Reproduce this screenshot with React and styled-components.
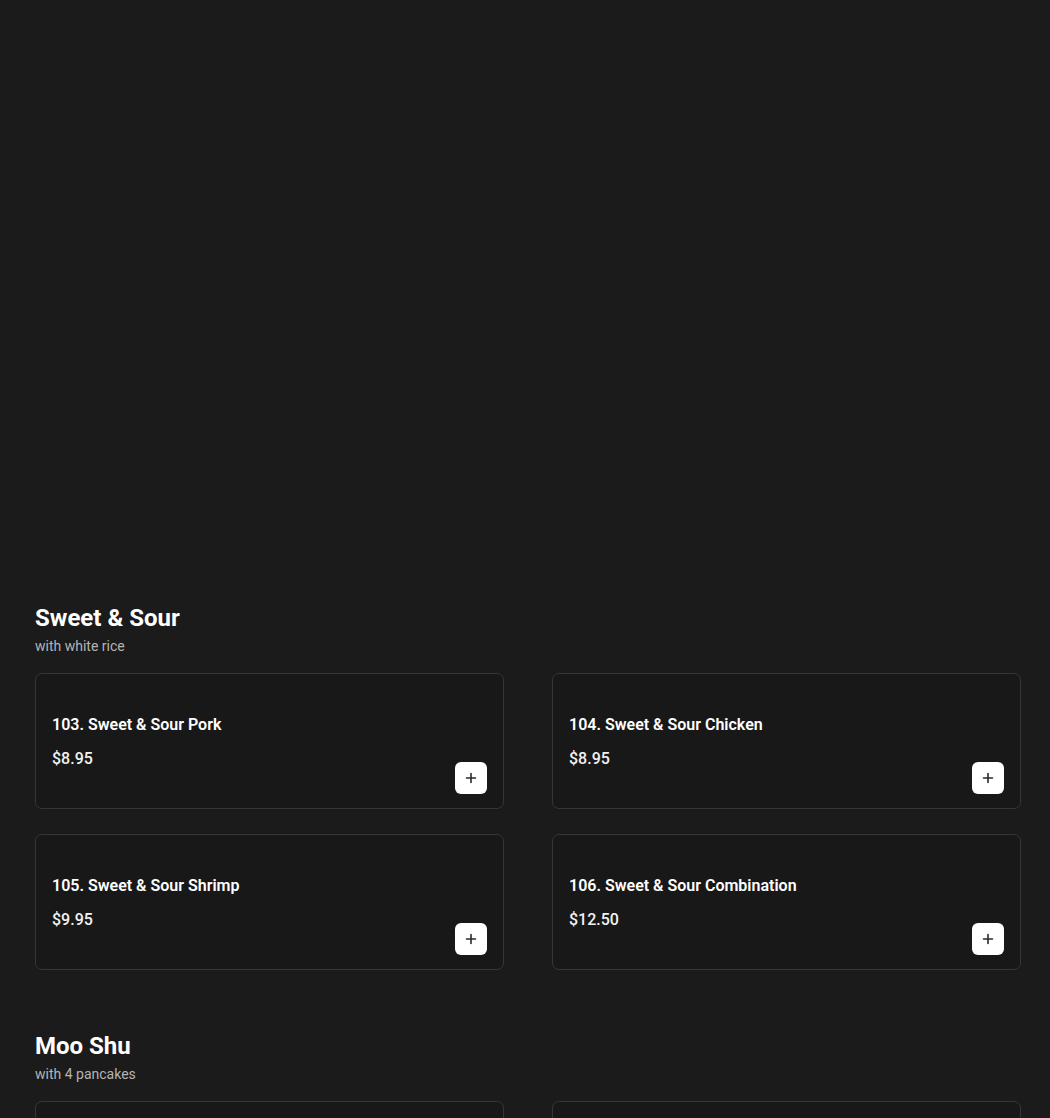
import styled, { createGlobalStyle } from 'styled-components';

const menu = [
  {
    title: 'Sweet & Sour',
    note: 'with white rice',
    items: [
      { name: '103. Sweet & Sour Pork', price: '$8.95' },
      { name: '104. Sweet & Sour Chicken', price: '$8.95' },
      { name: '105. Sweet & Sour Shrimp', price: '$9.95' },
      { name: '106. Sweet & Sour Combination', price: '$12.50' },
    ],
  },
  {
    title: 'Moo Shu',
    note: 'with 4 pancakes',
    items: [
      { name: '107. Moo Shu Pork', price: '$9.50' },
      { name: '108. Moo Shu Chicken', price: '$9.50' },
    ],
  },
];

const PlusIcon = () => (
  <svg width='12' height='12' viewBox='0 0 12 12' fill='none'>
    <path d='M6 1.5v9M1.5 6h9' stroke='#2a2a2a' strokeWidth='1.6' strokeLinecap='round' />
  </svg>
);

const App = () => {
  return (
    <>
      <GlobalStyle />
      <Page>
        <Hero />
        {menu.map((section) => (
          <Section key={section.title}>
            <SectionTitle>{section.title}</SectionTitle>
            <SectionNote>{section.note}</SectionNote>
            <Grid>
              {section.items.map((item) => (
                <Card key={item.name}>
                  <Info>
                    <ItemName>{item.name}</ItemName>
                    <Price>{item.price}</Price>
                  </Info>
                  <AddButton aria-label='Add'>
                    <PlusIcon />
                  </AddButton>
                </Card>
              ))}
            </Grid>
          </Section>
        ))}
      </Page>
    </>
  );
};

// styles
const GlobalStyle = createGlobalStyle`
  body {
    margin: 0;
    background: #1b1b1b;
    color: #fff;
    font-family: Roboto, 'Liberation Sans', sans-serif;
  }
`;
const Page = styled.div`
  padding: 0 29px 0 35px;
  height: 1118px;
  overflow: hidden;
`;
const Hero = styled.div`
  height: 602px;
`;
const Section = styled.section`
  margin-bottom: 60px;
`;
const SectionTitle = styled.h2`
  margin: 0;
  font-size: 24px;
  line-height: 32px;
  font-weight: 700;
  color: #fff;
`;
const SectionNote = styled.p`
  margin: 2px 0 17px;
  font-size: 14px;
  line-height: 20px;
  color: #b4b4b4;
`;
const Grid = styled.div`
  display: grid;
  grid-template-columns: 1fr 1fr;
  column-gap: 48px;
  row-gap: 25px;
`;
const Card = styled.div`
  display: flex;
  justify-content: space-between;
  padding: 41px 16px 14px;
  background: #181818;
  border: 1px solid #363636;
  border-radius: 7px;
`;
const Info = styled.div`
  display: flex;
  flex-direction: column;
  gap: 14px;
  padding-bottom: 25px;
`;
const ItemName = styled.div`
  font-size: 16px;
  line-height: 20px;
  font-weight: 600;
  color: #fff;
`;
const Price = styled.div`
  font-size: 16px;
  line-height: 20px;
  font-weight: 500;
  color: #f2f2f2;
`;
const AddButton = styled.button`
  align-self: flex-end;
  display: flex;
  align-items: center;
  justify-content: center;
  width: 32px;
  height: 32px;
  padding: 0;
  border: none;
  border-radius: 6px;
  background: #fff;
  cursor: pointer;
`;

export default App;
